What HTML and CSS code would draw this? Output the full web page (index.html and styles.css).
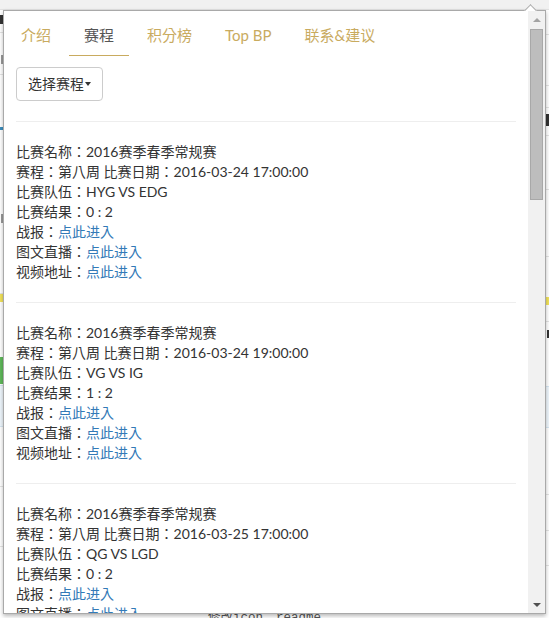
FILE: index.html
```html
<!DOCTYPE html>
<html lang="zh-TW">
<head>
<meta charset="utf-8">
<title>LPL 赛程</title>
<link rel="stylesheet" href="styles.css">
</head>
<body>
<div class="page">
  <div class="chrome"></div>
  <div class="bg-grid">
    <div class="bg-col bg-left">
      <div class="bg-row h23"><span class="bg-mark dark"></span></div>
      <div class="bg-row h42"><span class="bg-mark gray mid"></span></div>
      <div class="bg-row h55 blue-line"></div>
      <div class="bg-row h164"><span class="bg-mark gray low"></span></div>
      <div class="bg-yellow"></div>
      <div class="bg-row h55 noline"></div>
      <div class="bg-green"></div>
      <div class="bg-lightblue"></div>
      <div class="bg-row h60"></div>
      <div class="bg-row h60"></div>
      <div class="bg-row h60"></div>
    </div>
    <div class="bg-col bg-right">
      <div class="bg-row r25"></div>
      <div class="bg-row r51"></div>
      <div class="bg-row r22"></div>
      <div class="bg-row r28"><span class="bg-mark dark right"></span></div>
      <div class="bg-row r54"></div>
      <div class="bg-row r67"></div>
      <div class="bg-row r40 noline"></div>
      <div class="bg-yellow"></div>
      <div class="bg-row r17"></div>
      <div class="bg-row r63 noline"><span class="bg-mark dark right small"></span></div>
      <div class="bg-lightblue"></div>
      <div class="bg-row r67"></div>
      <div class="bg-row r36"></div>
      <div class="bg-row r35"></div>
    </div>
  </div>
  <div class="bg-footer" lang="zh-CN">修改icon<span class="gap">readme</span></div>
</div>

<div class="popup">
  <span class="notch"></span>
  <div class="popup-body">
    <div class="content">
      <ul class="tabs">
        <li><a class="tab">介绍</a></li>
        <li><a class="tab active">赛程</a></li>
        <li><a class="tab">积分榜</a></li>
        <li><a class="tab">Top BP</a></li>
        <li><a class="tab">联系&amp;建议</a></li>
      </ul>
      <button class="btn">选择赛程<span class="caret"></span></button>
      <hr class="sep">
      <div class="match">
        <div>比赛名称：2016赛季春季常规赛</div>
        <div>赛程：第八周 比赛日期：2016-03-24 17:00:00</div>
        <div>比赛队伍：HYG VS EDG</div>
        <div>比赛结果：0 : 2</div>
        <div>战报：<a class="link">点此进入</a></div>
        <div>图文直播：<a class="link">点此进入</a></div>
        <div>视频地址：<a class="link">点此进入</a></div>
      </div>
      <hr class="sep">
      <div class="match">
        <div>比赛名称：2016赛季春季常规赛</div>
        <div>赛程：第八周 比赛日期：2016-03-24 19:00:00</div>
        <div>比赛队伍：VG VS IG</div>
        <div>比赛结果：1 : 2</div>
        <div>战报：<a class="link">点此进入</a></div>
        <div>图文直播：<a class="link">点此进入</a></div>
        <div>视频地址：<a class="link">点此进入</a></div>
      </div>
      <hr class="sep">
      <div class="match">
        <div>比赛名称：2016赛季春季常规赛</div>
        <div>赛程：第八周 比赛日期：2016-03-25 17:00:00</div>
        <div>比赛队伍：QG VS LGD</div>
        <div>比赛结果：0 : 2</div>
        <div>战报：<a class="link">点此进入</a></div>
        <div>图文直播：<a class="link">点此进入</a></div>
        <div>视频地址：<a class="link">点此进入</a></div>
      </div>
    </div>
    <div class="scrollbar">
      <span class="arrow up"></span>
      <div class="thumb"></div>
      <div class="track-fill"></div>
      <span class="arrow down"></span>
    </div>
  </div>
</div>
</body>
</html>
```

FILE: styles.css
```css
* { box-sizing: border-box; }
html, body { margin: 0; padding: 0; }
body {
  width: 549px;
  height: 618px;
  overflow: hidden;
  background: #fff;
  font-family: Lato, "Noto Sans CJK TC", "Noto Sans CJK SC", sans-serif;
  font-size: 14px;
  color: #333;
  position: relative;
}

/* ---------- background page ---------- */
.page { display: flex; flex-direction: column; }
.chrome { height: 10px; background: #f1f1f1; border-bottom: 1px solid #e2e2e2; }
.bg-grid { display: grid; grid-template-columns: 1fr 1fr; height: 596px; overflow: hidden; }
.bg-col { display: flex; flex-direction: column; }
.bg-row { border-bottom: 1px solid #e4e4e4; flex: none; display: flex; flex-direction: column; }
.bg-row.noline { border-bottom: 0; }
.h23 { height: 23px; } .h42 { height: 42px; } .h55 { height: 55px; }
.h164 { height: 164px; } .h60 { height: 60px; }
.r25 { height: 25px; } .r51 { height: 51px; } .r22 { height: 22px; }
.r28 { height: 28px; } .r54 { height: 54px; } .r67 { height: 67px; }
.r40 { height: 40px; } .r17 { height: 17px; } .r63 { height: 63px; }
.r36 { height: 36px; } .r35 { height: 35px; }
.blue-line { border-bottom: 3px solid #3c8dbc; }
.bg-yellow { height: 8px; background: #f2e35a; flex: none; }
.bg-green { height: 27px; background: #5fb85a; flex: none; }
.bg-lightblue { height: 42px; background: #eef6fc; border-top: 1px solid #d6e6f2; border-bottom: 1px solid #d6e6f2; flex: none; margin-top: 1px; }
.bg-mark { display: block; width: 4px; height: 9px; margin-top: 5px; }
.bg-mark.dark { background: #333; }
.bg-mark.gray { background: #999; width: 2px; margin-left: 1px; }
.bg-mark.mid { margin-top: 22px; }
.bg-mark.low { margin-top: 84px; }
.bg-mark.right { align-self: flex-end; margin-top: 6px; height: 12px; }
.bg-mark.small { margin-top: 8px; height: 8px; width: 2px; }
.bg-footer {
  height: 12px;
  padding-left: 208px;
  font-family: "Liberation Mono", "Noto Sans CJK SC", monospace;
  font-size: 12.5px;
  line-height: 24px;
  color: #555;
  white-space: nowrap;
}
.gap { margin-left: 13px; }

/* ---------- popup ---------- */
.popup {
  position: absolute;
  left: 3px;
  top: 10px;
  width: 543px;
  height: 604px;
  background: #fff;
  border: 1px solid #a9a9a9;
  box-shadow: 0 2px 4px rgba(0, 0, 0, 0.28);
  z-index: 2;
}
.notch {
  position: absolute;
  right: 10px;
  top: -5px;
  width: 9px;
  height: 9px;
  background: #fff;
  border-left: 1px solid #a9a9a9;
  border-top: 1px solid #a9a9a9;
  transform: rotate(45deg);
}
.popup-body {
  display: flex;
  height: 100%;
  position: relative;
  z-index: 1;
  background: #fff;
}
.content {
  flex: 1;
  min-width: 0;
  overflow: hidden;
  padding: 4px 12px 0 12px;
}

.tabs {
  list-style: none;
  margin: 0 0 0 -10px;
  padding: 0;
  display: flex;
  gap: 3px;
}
.tab {
  display: block;
  padding: 10px 15px;
  font-size: 15px;
  line-height: 20px;
  color: #c9ab5f;
  border-bottom: 1px solid transparent;
  cursor: pointer;
}
.tab.active {
  color: #555;
  border-bottom-color: #c9ab5f;
}

.btn {
  margin-top: 11px;
  display: inline-flex;
  align-items: center;
  height: 34px;
  padding: 6px 11px 6px 11px;
  border: 1px solid #ccc;
  border-radius: 4px;
  background: #fff;
  font-family: Lato, "Noto Sans CJK TC", "Noto Sans CJK SC", sans-serif;
  font-size: 14px;
  line-height: 20px;
  color: #333;
}
.caret {
  display: inline-block;
  margin-left: 1px;
  width: 0;
  height: 0;
  border-top: 4px solid #333;
  border-left: 3.5px solid transparent;
  border-right: 3.5px solid transparent;
}

.sep {
  margin: 20px 0;
  border: 0;
  border-top: 1px solid #eee;
  height: 0;
}
.match { line-height: 20px; }
.link { color: #337ab7; cursor: pointer; }

/* ---------- fake scrollbar ---------- */
.scrollbar {
  width: 17px;
  flex: none;
  background: #f1f1f1;
  display: flex;
  flex-direction: column;
  align-items: center;
  padding: 7px 0 6px;
}
.arrow {
  width: 0;
  height: 0;
  border-left: 4px solid transparent;
  border-right: 4px solid transparent;
  flex: none;
}
.arrow.up { border-bottom: 4px solid #a3a3a3; }
.arrow.down { border-top: 4px solid #505050; }
.thumb {
  margin-top: 7px;
  width: 13px;
  height: 171px;
  background: #bdbdbd;
  border: 1px solid #a8a8a8;
  flex: none;
}
.track-fill { flex: 1; }
```
